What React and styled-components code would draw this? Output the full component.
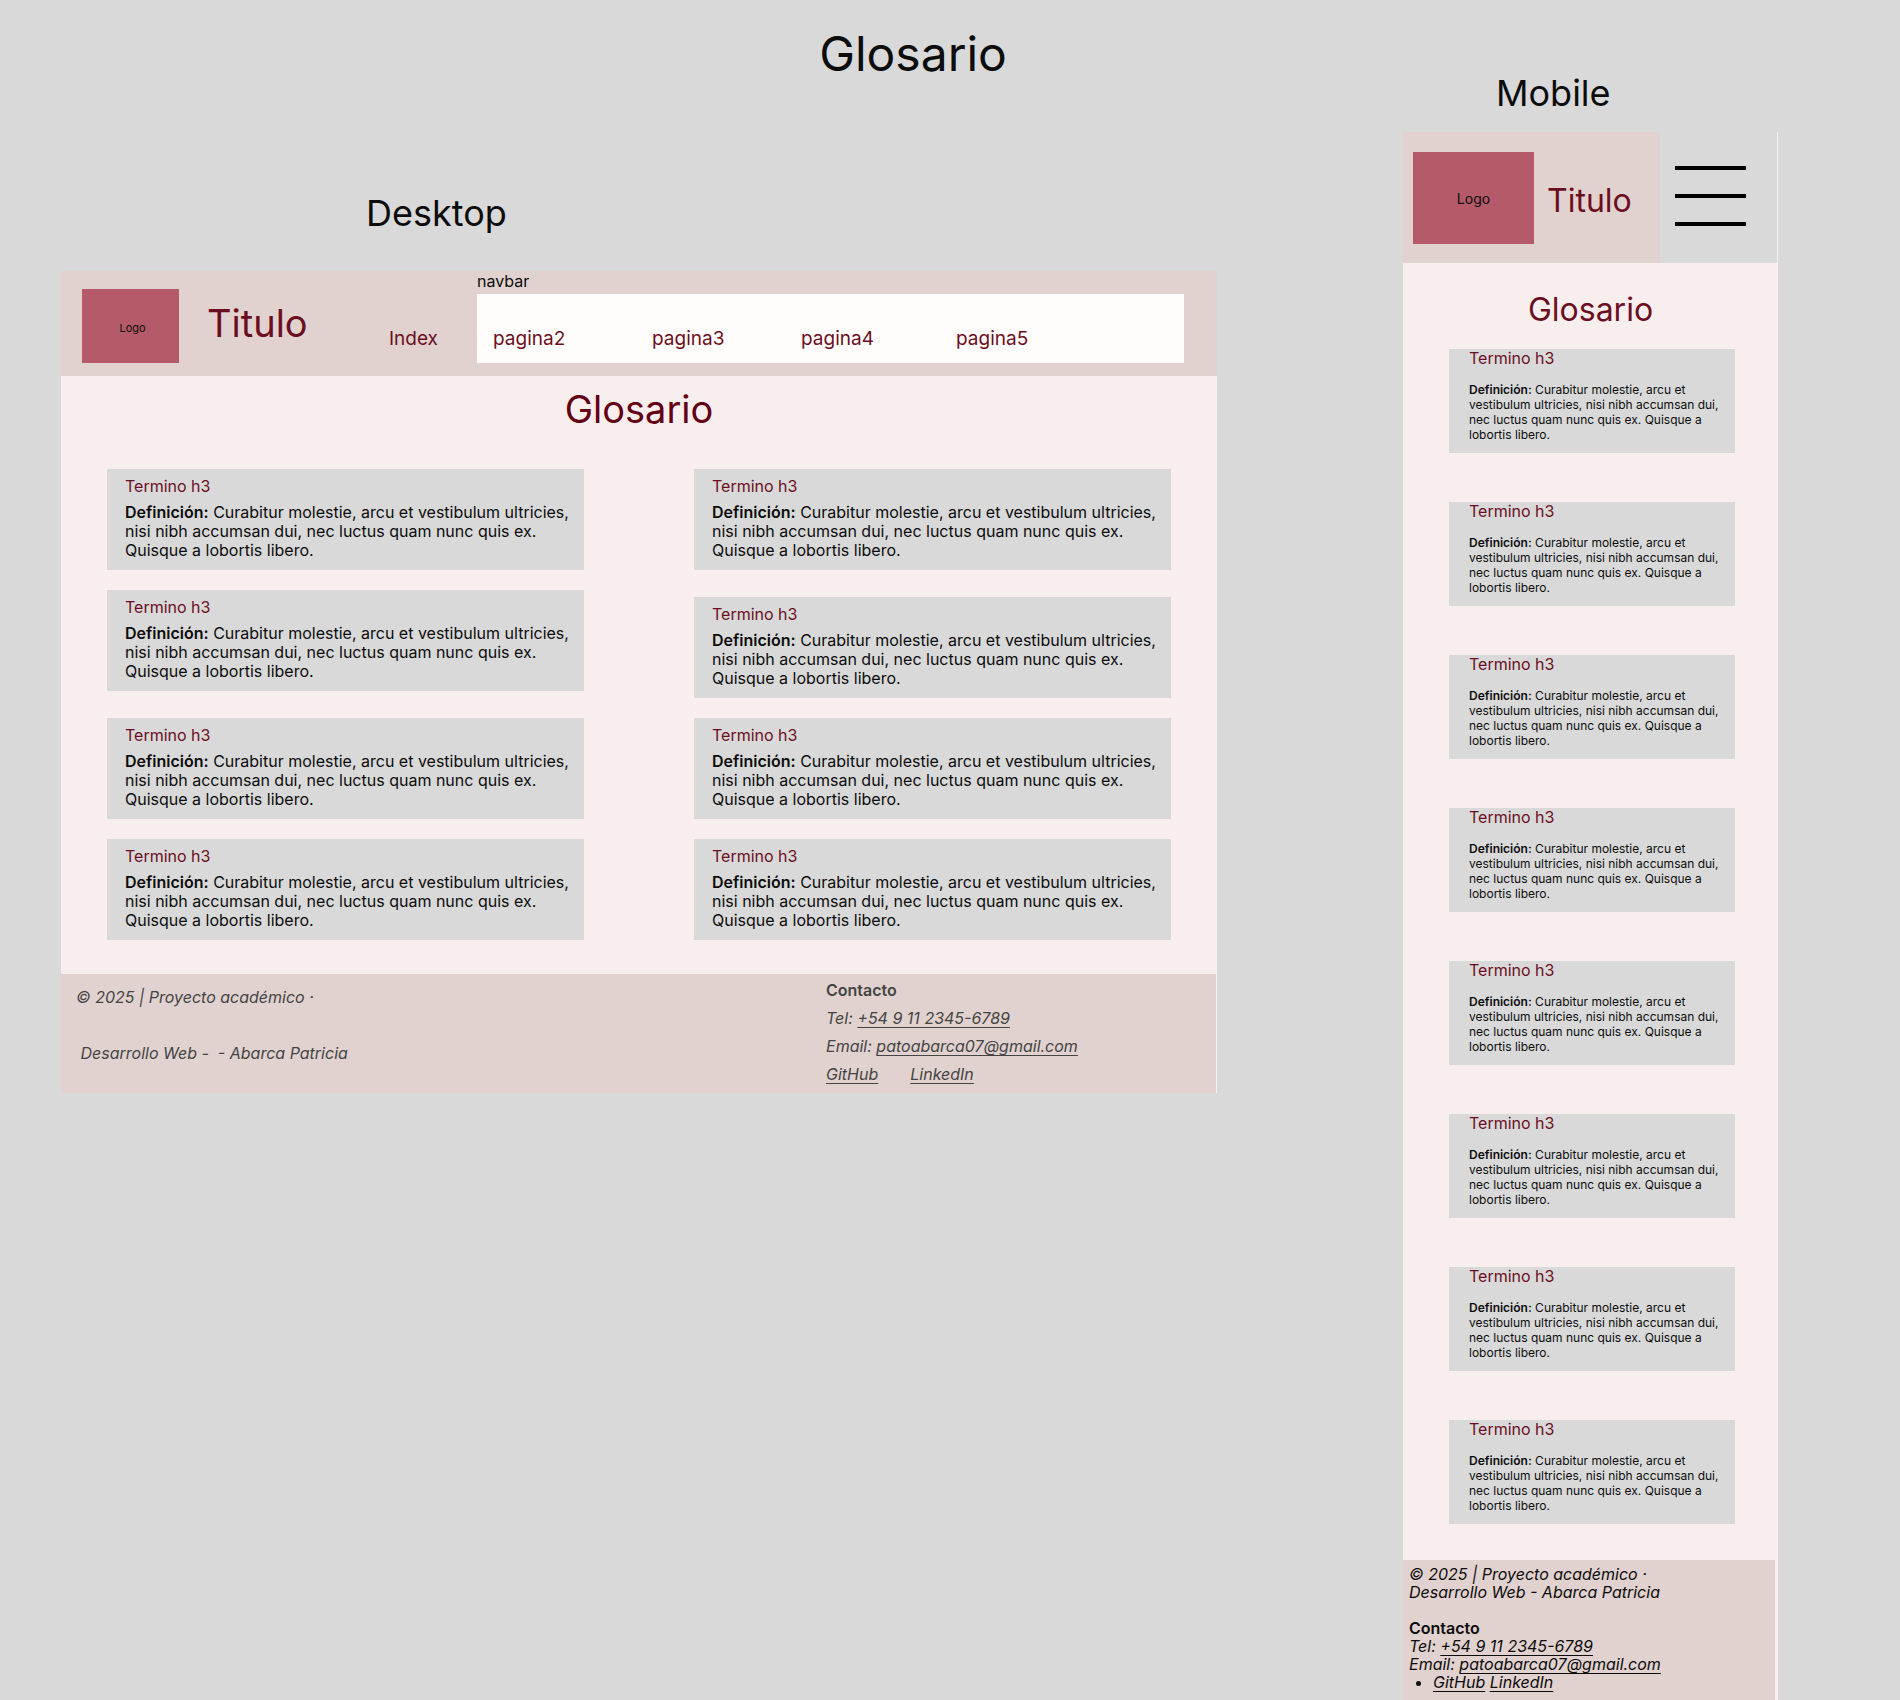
import React from "react";
import styled, { createGlobalStyle } from "styled-components";

const GlobalStyle = createGlobalStyle`
  *, *::before, *::after { box-sizing: border-box; }
  body {
    margin: 0;
    background: #d9d9d9;
    color: #0c0c0c;
    font-family: Inter, "Liberation Sans", sans-serif;
    font-size: 16px;
  }
  h1, h2, h3, p, ul { margin: 0; padding: 0; font-weight: 400; }
  a {
    color: inherit;
    text-decoration-thickness: 1px;
    text-underline-offset: 3px;
  }
`;

const wine = "#6c0e22";
const rose = "#e1d2cf";
const cream = "#f7eeed";
const grey = "#d9d9d9";

const Page = styled.main`
  padding: 33px 122px 0 61px;
`;

const PageTitle = styled.h1`
  padding-right: 13px;
  font-size: 48px;
  line-height: 42px;
  text-align: center;
`;

const Boards = styled.div`
  display: grid;
  grid-template-columns: minmax(0, 1fr) 375px;
  gap: 186px;
  align-items: start;
`;

const DesktopColumn = styled.section`
  padding-top: 120px;
`;

const MobileColumn = styled.section``;

const BoardLabel = styled.h2`
  padding-left: ${(p) => p.$indent}px;
  margin-bottom: ${(p) => p.$gap}px;
  font-size: 36px;
  line-height: 36px;
`;

const Board = styled.article`
  background: ${cream};
`;

const LogoBox = styled.div`
  display: flex;
  align-items: center;
  justify-content: center;
  flex: none;
  background: #b45a69;
`;

const DesktopLogo = styled(LogoBox)`
  width: 97px;
  height: 74px;
  padding: 4px 0 0 4px;
  font-size: 11px;
`;

const MobileLogo = styled(LogoBox)`
  width: 121px;
  height: 92px;
  font-size: 14px;
`;

const DesktopHeader = styled.header`
  display: flex;
  align-items: flex-end;
  height: 105px;
  padding: 0 33px 13px 21px;
  background: ${rose};
`;

const DesktopTitle = styled.p`
  width: 210px;
  padding: 0 0 16px 28px;
  color: ${wine};
  font-size: 38px;
  line-height: 48px;
`;

const NavLink = styled.a`
  color: ${wine};
  font-size: 19px;
  line-height: 24px;
  text-decoration: none;
`;

const IndexSlot = styled.div`
  width: 88px;
  padding-bottom: 12px;
  line-height: 24px;
`;

const NavGroup = styled.nav`
  flex: 1;
`;

const NavCaption = styled.p`
  margin-bottom: 3px;
  line-height: 20px;
`;

const NavList = styled.ul`
  display: grid;
  grid-template-columns: 159px 149px 155px auto;
  align-items: end;
  height: 69px;
  padding: 0 0 12px 16px;
  background: #fefdfc;
  line-height: 24px;
  list-style: none;
`;

const DesktopHeading = styled.h2`
  padding: 9px 0 36px;
  color: #640014;
  font-size: 38px;
  line-height: 48px;
  text-align: center;
`;

const DesktopTerms = styled.div`
  display: grid;
  grid-template-columns: 1fr 1fr;
  grid-template-rows: auto 108px auto auto;
  gap: 20px 110px;
  align-items: start;
  padding: 0 46px 34px;
`;

const TermTitle = styled.h3`
  color: ${wine};
  font-size: 16px;
`;

const Definition = styled.p`
  strong { font-weight: 600; }
`;

const DesktopCard = styled.section`
  align-self: ${(p) => (p.$low ? "end" : "start")};
  padding: 7px 10px 10px 18px;
  background: ${grey};

  ${TermTitle} { line-height: 20px; margin-bottom: 7px; }
  ${Definition} { line-height: 19px; }
`;

const DesktopFooter = styled.footer`
  display: grid;
  grid-template-columns: 2fr 1fr;
  margin-right: 1px;
  padding: 2px 15px 5px;
  background: ${rose};
  color: #444;
  line-height: 28px;
`;

const Credits = styled.p`
  padding-top: 7px;
  font-style: italic;
  white-space: pre-wrap;
`;

const Contact = styled.address`
  font-style: italic;
`;

const ContactTitle = styled.p`
  font-style: normal;
  font-weight: 600;
`;

const Socials = styled.p`
  display: flex;
  gap: 32px;
`;

const MobileHeader = styled.header`
  display: flex;
  height: 131px;
  margin-right: 1px;
`;

const MobileBrand = styled.div`
  display: flex;
  flex: 1;
  align-items: center;
  gap: 13px;
  padding: 1px 10px 0;
  background: ${rose};
`;

const MobileTitle = styled.p`
  padding-top: 6px;
  color: ${wine};
  font-size: 32px;
  line-height: 40px;
`;

const MenuButton = styled.button`
  display: flex;
  flex-direction: column;
  gap: 24px;
  width: 117px;
  padding: 34px 15px 0;
  border: 0;
  background: ${grey};
  cursor: pointer;
`;

const MenuBar = styled.span`
  width: 71px;
  height: 4px;
  background: #000;
`;

const MobileHeading = styled.h2`
  padding: 27px 0 19px;
  color: ${wine};
  font-size: 32px;
  line-height: 40px;
  text-align: center;
`;

const MobileTerms = styled.div`
  display: flex;
  flex-direction: column;
  gap: 49px;
  padding: 0 43px 36px 46px;
`;

const MobileCard = styled.section`
  padding: 0 16px 11px 20px;
  background: ${grey};

  ${TermTitle} { line-height: 18px; margin-bottom: 15px; }
  ${Definition} { font-size: 12px; line-height: 15px; }
`;

const MobileFooter = styled.footer`
  margin-right: 3px;
  padding: 5px 6px 9px;
  background: ${rose};
  line-height: 18px;

  ${Credits} { padding: 0 0 18px; }
`;

const BulletList = styled.ul`
  padding-left: 24px;
`;

const terms = Array.from({ length: 8 }, (_, id) => ({
  id,
  title: "Termino h3",
  text: "Curabitur molestie, arcu et vestibulum ultricies, nisi nibh accumsan dui, nec luctus quam nunc quis ex. Quisque a lobortis libero.",
}));

const pages = ["pagina2", "pagina3", "pagina4", "pagina5"];

function TermBody({ term }) {
  return (
    <>
      <TermTitle>{term.title}</TermTitle>
      <Definition>
        <strong>Definición:</strong> {term.text}
      </Definition>
    </>
  );
}

function ContactLines() {
  return (
    <>
      <ContactTitle>Contacto</ContactTitle>
      <p>
        Tel: <a href="tel:+5491123456789">+54 9 11 2345-6789</a>
      </p>
      <p>
        Email: <a href="mailto:patoabarca07@gmail.com">patoabarca07@gmail.com</a>
      </p>
    </>
  );
}

function DesktopBoard() {
  return (
    <Board>
      <DesktopHeader>
        <DesktopLogo>Logo</DesktopLogo>
        <DesktopTitle>Titulo</DesktopTitle>
        <IndexSlot>
          <NavLink href="#index">Index</NavLink>
        </IndexSlot>
        <NavGroup aria-label="navbar">
          <NavCaption>navbar</NavCaption>
          <NavList>
            {pages.map((page) => (
              <li key={page}>
                <NavLink href={`#${page}`}>{page}</NavLink>
              </li>
            ))}
          </NavList>
        </NavGroup>
      </DesktopHeader>
      <DesktopHeading>Glosario</DesktopHeading>
      <DesktopTerms>
        {terms.map((term) => (
          <DesktopCard key={term.id} $low={term.id === 3}>
            <TermBody term={term} />
          </DesktopCard>
        ))}
      </DesktopTerms>
      <DesktopFooter>
        <Credits>{"© 2025 | Proyecto académico ·\n\n Desarrollo Web -  - Abarca Patricia"}</Credits>
        <Contact>
          <ContactLines />
          <Socials>
            <a href="#github">GitHub</a>
            <a href="#linkedin">LinkedIn</a>
          </Socials>
        </Contact>
      </DesktopFooter>
    </Board>
  );
}

function MobileBoard() {
  return (
    <Board>
      <MobileHeader>
        <MobileBrand>
          <MobileLogo>Logo</MobileLogo>
          <MobileTitle>Titulo</MobileTitle>
        </MobileBrand>
        <MenuButton type="button" aria-label="Menu">
          <MenuBar />
          <MenuBar />
          <MenuBar />
        </MenuButton>
      </MobileHeader>
      <MobileHeading>Glosario</MobileHeading>
      <MobileTerms>
        {terms.map((term) => (
          <MobileCard key={term.id}>
            <TermBody term={term} />
          </MobileCard>
        ))}
      </MobileTerms>
      <MobileFooter>
        <Credits>{"© 2025 | Proyecto académico ·\nDesarrollo Web - Abarca Patricia"}</Credits>
        <Contact>
          <ContactLines />
          <BulletList>
            <li>
              <a href="#github">GitHub</a> <a href="#linkedin">LinkedIn</a>
            </li>
          </BulletList>
        </Contact>
      </MobileFooter>
    </Board>
  );
}

export default function App() {
  return (
    <>
      <GlobalStyle />
      <Page>
        <PageTitle>Glosario</PageTitle>
        <Boards>
          <DesktopColumn>
            <BoardLabel $indent={305} $gap={40}>Desktop</BoardLabel>
            <DesktopBoard />
          </DesktopColumn>
          <MobileColumn>
            <BoardLabel $indent={93} $gap={21}>Mobile</BoardLabel>
            <MobileBoard />
          </MobileColumn>
        </Boards>
      </Page>
    </>
  );
}
